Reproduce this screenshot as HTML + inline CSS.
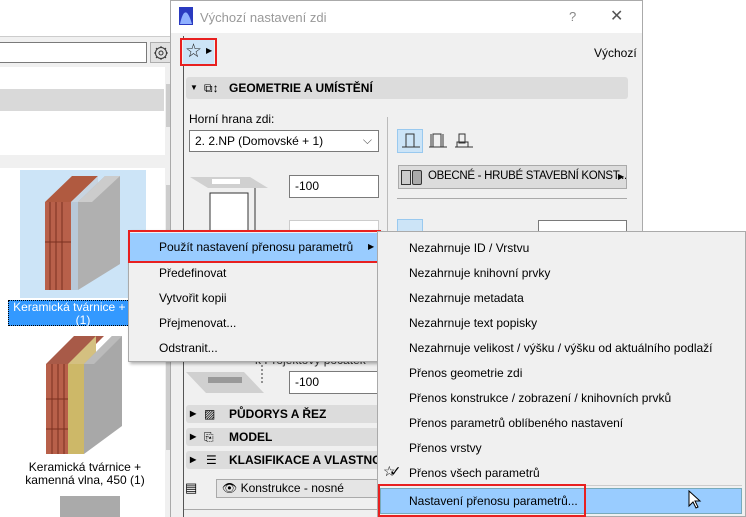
<!DOCTYPE html>
<html><head><meta charset="utf-8"><style>
*{margin:0;padding:0;box-sizing:border-box}
body{width:746px;height:517px;overflow:hidden;background:#fff;position:relative;font-family:"Liberation Sans",sans-serif;font-size:12px;color:#000}
.a{position:absolute}
.t{position:absolute;white-space:nowrap}
.inp{position:absolute;background:#fff;border:1px solid #7a7a7a;padding-left:5px;line-height:20px}
.hdr{position:absolute;left:186px;width:442px;background:#dcdcdc;border-radius:3px;font-weight:bold;font-size:12px}
.mi{position:absolute;white-space:nowrap;font-size:12px}
</style></head><body>
<!-- left panel -->
<div class="a" style="left:0;top:36px;width:183px;height:481px;background:#f0f0f0;border-top:1px solid #ccc"></div>
<div class="a" style="left:0;top:42px;width:147px;height:21px;background:#fff;border:1px solid #7a7a7a;border-left:none"></div>
<div class="a" style="left:150px;top:42px;width:26px;height:21px;background:#e1e1e1;border:1px solid #adadad"></div>
<svg class="a" style="left:152px;top:44px" width="24" height="18"><circle cx="9" cy="9" r="5.5" fill="none" stroke="#333"/><circle cx="9" cy="9" r="2" fill="none" stroke="#333"/><path d="M9 2v2M9 14v2M2 9h2M14 9h2M4 4l1.5 1.5M12.5 12.5L14 14M4 14l1.5-1.5M12.5 5.5L14 4" stroke="#333"/><path d="M19 6l3 3-3 3z" fill="#333"/></svg>
<div class="a" style="left:0;top:67px;width:165px;height:88px;background:#fff"></div>
<div class="a" style="left:0;top:89px;width:164px;height:22px;background:#d9d9d9"></div>
<div class="a" style="left:165px;top:67px;width:17px;height:88px;background:#f0f0f0"></div>
<div class="a" style="left:166px;top:84px;width:14px;height:43px;background:#cdcdcd"></div>
<div class="t" style="left:168px;top:68px;font-size:10px">⌃</div>
<div class="t" style="left:168px;top:138px;font-size:10px">⌄</div>
<div class="a" style="left:0;top:168px;width:165px;height:349px;background:#fff"></div>
<div class="a" style="left:165px;top:168px;width:17px;height:349px;background:#f0f0f0"></div>
<div class="a" style="left:166px;top:185px;width:14px;height:265px;background:#cdcdcd"></div>
<div class="t" style="left:168px;top:170px;font-size:10px">⌃</div>
<div class="a" style="left:20px;top:170px;width:126px;height:128px;background:#cce4f7"></div>
<svg class="a" style="left:40px;top:172px" width="90" height="128"><polygon points="5,30 32,4 58,4 31,30" fill="#b05a40"/><polygon points="5,30 31,30 31,118 5,118" fill="#b8604a"/><polygon points="31,30 58,4 58,92 31,118" fill="#c8d4e0"/><polygon points="31,30 38,30 38,118 31,118" fill="#b8c8d8"/><polygon points="38,30 65,4 80,4 80,92 38,118" fill="#b0b0b0"/><polygon points="38,30 65,4 80,4 52,30" fill="#ccc"/><g stroke="#7a3020" stroke-width="1"><line x1="10" y1="30" x2="10" y2="118"/><line x1="16" y1="30" x2="16" y2="118"/><line x1="22" y1="30" x2="22" y2="118"/><line x1="5" y1="70" x2="31" y2="70"/></g></svg>
<div class="a" style="left:8px;top:300px;width:130px;height:26px;background:#3399ff;border:1px dotted #000"></div>
<div class="t" style="left:8px;top:301px;width:150px;text-align:center;color:#fff;font-size:12px;line-height:13px">Keramická tvárnice + EPS<br>(1)</div>
<svg class="a" style="left:44px;top:334px" width="90" height="122"><polygon points="2,30 30,2 60,2 32,30" fill="#a85a48"/><polygon points="2,30 24,30 24,120 2,120" fill="#b8604a"/><polygon points="24,30 52,2 52,92 24,120" fill="#d4c080"/><polygon points="24,30 40,30 40,120 24,120" fill="#cdb868"/><polygon points="40,30 68,2 78,2 78,92 40,120" fill="#a8a8a8"/><polygon points="40,30 68,2 78,2 50,30" fill="#bbb"/><g stroke="#7a3020"><line x1="8" y1="30" x2="8" y2="120"/><line x1="14" y1="30" x2="14" y2="120"/><line x1="20" y1="30" x2="20" y2="120"/><line x1="2" y1="65" x2="24" y2="65"/><line x1="2" y1="95" x2="24" y2="95"/></g></svg>
<div class="t" style="left:15px;top:461px;width:140px;text-align:center;font-size:12px;line-height:13px">Keramická tvárnice +<br>kamenná vlna, 450 (1)</div>
<div class="a" style="left:60px;top:496px;width:60px;height:21px;background:#aaa"></div>
<!-- dialog -->
<div class="a" style="left:170px;top:0;width:473px;height:517px;background:#f0f0f0;border:1px solid #aaa;border-bottom:none"></div>
<div class="a" style="left:171px;top:1px;width:471px;height:32px;background:#fff"></div>
<svg class="a" style="left:179px;top:7px" width="14" height="18"><rect width="14" height="18" fill="#2a3ac0"/><path d="M1 17C4 3 8 0 13 17Z" fill="#8fb0ff"/></svg>
<div class="t" style="left:200px;top:10px;font-size:13px;color:#999">Výchozí nastavení zdi</div>
<div class="t" style="left:569px;top:9px;font-size:13px;color:#888">?</div>
<div class="t" style="left:610px;top:6px;font-size:16px;color:#555">✕</div>
<div class="a" style="left:183px;top:36px;width:1px;height:481px;background:#555"></div>
<div class="a" style="left:180px;top:38px;width:37px;height:28px;border:2px solid #e82020"></div>
<div class="a" style="left:183px;top:40px;width:31px;height:24px;background:#cce4f7"></div>
<div class="t" style="left:185px;top:40px;font-size:19px;color:#222">☆</div>
<div class="t" style="left:206px;top:46px;font-size:8px">▶</div>
<div class="t" style="left:594px;top:46px">Výchozí</div>
<div class="hdr" style="top:77px;height:22px;line-height:22px"><span style="position:absolute;left:4px;font-size:8px">▼</span><span style="position:absolute;left:18px;font-weight:normal">⧉↕</span><span style="position:absolute;left:43px">GEOMETRIE A UMÍSTĚNÍ</span></div>
<div class="t" style="left:189px;top:112px">Horní hrana zdi:</div>
<div class="inp" style="left:189px;top:130px;width:190px;height:22px">2. 2.NP (Domovské + 1)<span style="position:absolute;right:6px;top:-1px;color:#555">⌵</span></div>
<div class="a" style="left:387px;top:117px;width:1px;height:275px;background:#bbb"></div>
<div class="a" style="left:397px;top:129px;width:26px;height:24px;background:#cce4f7;border:1px solid #99c9ef"></div>
<svg class="a" style="left:400px;top:131px" width="80" height="20"><g fill="none" stroke="#333"><rect x="6" y="3" width="8" height="13"/><path d="M2 16h18"/><rect x="33" y="3" width="8" height="13"/><path d="M31 3v13M43 3v13M29 16h18"/><rect x="59" y="3" width="6" height="9"/><path d="M57 16v-5h11v5M55 16h18"/></g></svg>
<div class="a" style="left:398px;top:165px;width:229px;height:24px;background:#dcdcdc;border:1px solid #aaa;overflow:hidden"><div class="t" style="left:29px;top:4px;font-size:11.5px;letter-spacing:-0.3px">OBECNÉ - HRUBÉ STAVEBNÍ KONST...</div></div>
<div class="a" style="left:401px;top:170px;width:10px;height:15px;border:1px solid #333;background:#ccc"></div>
<div class="a" style="left:412px;top:170px;width:10px;height:15px;border:1px solid #333;background:#aaa;border-radius:2px"></div>
<div class="t" style="left:618px;top:172px;font-size:8px">▶</div>
<div class="a" style="left:397px;top:198px;width:230px;height:1px;background:#aaa"></div>
<div class="a" style="left:397px;top:219px;width:26px;height:14px;background:#cce4f7;border:1px solid #99c9ef"></div>
<div class="inp" style="left:538px;top:220px;width:89px;height:14px"></div>
<svg class="a" style="left:190px;top:175px" width="90" height="56"><polygon points="0,2 60,2 78,13 18,13" fill="#d0d0d0"/><rect x="22" y="4" width="28" height="5" fill="#fff"/><rect x="20" y="18" width="38" height="40" fill="#fff" stroke="#333"/><path d="M65 13v45" stroke="#333"/></svg>
<div class="inp" style="left:289px;top:175px;width:90px;height:23px">-100</div>
<div class="inp" style="left:289px;top:220px;width:90px;height:14px;border-color:#ccc;color:#aaa"></div>
<div class="t" style="left:255px;top:353px;color:#333">k Projektový počátek</div>
<svg class="a" style="left:186px;top:365px" width="90" height="34"><polygon points="0,7 58,7 78,28 20,28" fill="#d0d0d0"/><rect x="22" y="12" width="34" height="6" fill="#999"/><path d="M76 0v20" stroke="#333" stroke-dasharray="2,2"/></svg>
<div class="inp" style="left:289px;top:371px;width:90px;height:23px">-100</div>
<div class="hdr" style="top:405px;height:18px;line-height:18px"><span style="position:absolute;left:4px;font-size:8px">▶</span><span style="position:absolute;left:18px;font-weight:normal">▨</span><span style="position:absolute;left:43px">PŮDORYS A ŘEZ</span></div>
<div class="hdr" style="top:428px;height:18px;line-height:18px"><span style="position:absolute;left:4px;font-size:8px">▶</span><span style="position:absolute;left:18px;font-weight:normal">⎘</span><span style="position:absolute;left:43px">MODEL</span></div>
<div class="hdr" style="top:451px;height:18px;line-height:18px"><span style="position:absolute;left:4px;font-size:8px">▶</span><span style="position:absolute;left:20px;font-weight:normal">☰</span><span style="position:absolute;left:43px">KLASIFIKACE A VLASTNOSTI</span></div>
<div class="t" style="left:185px;top:480px;font-size:13px">▤</div>
<div class="a" style="left:216px;top:479px;width:165px;height:19px;background:#e5e5e5;border:1px solid #aaa"></div>
<div class="t" style="left:222px;top:481px">👁 Konstrukce - nosné</div>
<div class="a" style="left:184px;top:509px;width:200px;height:1px;background:#aaa"></div>
<!-- menu 1 -->
<div class="a" style="left:128px;top:230px;width:252px;height:132px;background:#f0f0f0;border:1px solid #aaa;box-shadow:2px 2px 3px rgba(0,0,0,.3)"></div>
<div class="a" style="left:128px;top:230px;width:253px;height:33px;border:2px solid #e82020"></div>
<div class="a" style="left:130px;top:233px;width:249px;height:28px;background:#99ccff"></div>
<div class="mi" style="left:159px;top:240px">Použít nastavení přenosu parametrů</div>
<div class="t" style="left:368px;top:242px;font-size:8px">▶</div>
<div class="mi" style="left:159px;top:266px">Předefinovat</div>
<div class="mi" style="left:159px;top:291px">Vytvořit kopii</div>
<div class="mi" style="left:159px;top:316px">Přejmenovat...</div>
<div class="mi" style="left:159px;top:341px">Odstranit...</div>
<!-- submenu -->
<div class="a" style="left:377px;top:231px;width:369px;height:286px;background:#f0f0f0;border:1px solid #aaa"></div>
<div class="mi" style="left:409px;top:241px">Nezahrnuje ID / Vrstvu</div>
<div class="mi" style="left:409px;top:266px">Nezahrnuje knihovní prvky</div>
<div class="mi" style="left:409px;top:291px">Nezahrnuje metadata</div>
<div class="mi" style="left:409px;top:316px">Nezahrnuje text popisky</div>
<div class="mi" style="left:409px;top:341px">Nezahrnuje velikost / výšku / výšku od aktuálního podlaží</div>
<div class="mi" style="left:409px;top:366px">Přenos geometrie zdi</div>
<div class="mi" style="left:409px;top:391px">Přenos konstrukce / zobrazení / knihovních prvků</div>
<div class="mi" style="left:409px;top:416px">Přenos parametrů oblíbeného nastavení</div>
<div class="mi" style="left:409px;top:441px">Přenos vrstvy</div>
<div class="t" style="left:383px;top:463px;font-size:14px">☆<span style="margin-left:-6px">✓</span></div>
<div class="mi" style="left:409px;top:466px">Přenos všech parametrů</div>
<div class="a" style="left:380px;top:485px;width:362px;height:1px;background:#ccc"></div>
<div class="a" style="left:380px;top:488px;width:362px;height:26px;background:#99ccff;border:1px solid #7ab"></div>
<div class="a" style="left:378px;top:484px;width:208px;height:33px;border:2px solid #e82020"></div>
<div class="mi" style="left:409px;top:494px">Nastavení přenosu parametrů...</div>
<svg class="a" style="left:688px;top:490px" width="14" height="20"><path d="M1 1v15l4-4 3 6 2-1-3-6h5z" fill="#fff" stroke="#000"/></svg>
</body></html>
